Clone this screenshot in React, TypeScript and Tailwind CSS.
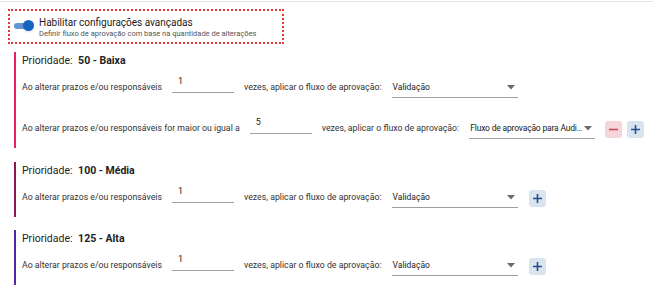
import { useState } from 'react';

type Row = {
	label: string;
	value: string;
	flow: string;
	remove?: boolean;
	add?: boolean;
};

type Section = {
	value: string;
	color: string;
	rows: Row[];
};

const sections: Section[] = [
	{
		value: '50 - Baixa',
		color: 'border-[#e91e63]',
		rows: [
			{ label: 'Ao alterar prazos e/ou responsáveis', value: '1', flow: 'Validação' },
			{
				label: 'Ao alterar prazos e/ou responsáveis for maior ou igual a',
				value: '5',
				flow: 'Fluxo de aprovação para Audi…',
				remove: true,
				add: true,
			},
		],
	},
	{
		value: '100 - Média',
		color: 'border-[#8c1850]',
		rows: [{ label: 'Ao alterar prazos e/ou responsáveis', value: '1', flow: 'Validação', add: true }],
	},
	{
		value: '125 - Alta',
		color: 'border-[#5522a8]',
		rows: [{ label: 'Ao alterar prazos e/ou responsáveis', value: '1', flow: 'Validação', add: true }],
	},
];

const PlusIcon = () => (
	<svg width="11" height="11" viewBox="0 0 11 11">
		<path d="M5.5 1v9M1 5.5h9" stroke="#1f4f8f" strokeWidth="1.6" />
	</svg>
);

const MinusIcon = () => (
	<svg width="11" height="11" viewBox="0 0 11 11">
		<path d="M1 5.5h9" stroke="#d2455a" strokeWidth="1.6" />
	</svg>
);

const RuleRow = ({ row }: { row: Row }) => (
	<div className="flex items-center h-[26px] text-[8.75px] text-[#333]">
		<span className="whitespace-nowrap">{row.label}</span>
		<div className="ml-[10px] w-[62px] h-[16px] border-b border-[#9e9e9e] mt-[-7px] relative shrink-0">
			<span className="absolute left-[6px] top-0 leading-none text-[9px] text-[#222]">{row.value}</span>
		</div>
		<span className="ml-[10px] whitespace-nowrap">vezes, aplicar o fluxo de aprovação:</span>
		<div className="ml-[10px] w-[126px] h-[20px] shrink-0 border-b border-[#9e9e9e] flex items-center pl-[1px] text-[8.5px] text-[#222]">
			<span className={`whitespace-nowrap ${row.remove ? 'tracking-[-0.18px]' : ''}`}>{row.flow}</span>
			<svg width="8" height="5" viewBox="0 0 8 5" className="ml-auto mr-[3px] shrink-0">
				<path d="M0 0h8L4 4.5z" fill="#6b6b6b" />
			</svg>
		</div>
		{row.remove && (
			<button className="ml-[10px] w-[17px] h-[17px] shrink-0 rounded-[3px] bg-[#f4d6d9] flex items-center justify-center">
				<MinusIcon />
			</button>
		)}
		{row.add && (
			<button
				className={`${row.remove ? 'ml-[5px]' : 'ml-[11px]'} w-[17px] h-[17px] shrink-0 rounded-[3px] bg-[#d9e4ee] flex items-center justify-center`}
			>
				<PlusIcon />
			</button>
		)}
	</div>
);

export default function App() {
	const [enabled, setEnabled] = useState(true);

	return (
		<div className="w-[653px] h-[295px] bg-white overflow-hidden font-['Roboto',sans-serif]">
			<div className="mt-[1px] h-px bg-[#e3e3e3]" />
			<div className="mt-[7px] ml-[8px] w-[276px] h-[35px] border-2 border-dotted border-[#e53935] flex items-start pl-[4px] pt-[6px]">
				<button
					onClick={() => setEnabled(!enabled)}
					className="relative w-[21px] h-[12px] mt-[3px] shrink-0"
				>
					<span className="absolute left-0 top-[3px] w-[18px] h-[6px] rounded-full bg-[#6494d6]" />
					<span
						className={`absolute top-0 w-[11px] h-[11px] rounded-full bg-[#1565c0] shadow ${enabled ? 'left-[9px]' : 'left-0'}`}
					/>
				</button>
				<div className="ml-[4px]">
					<div className="text-[10px] text-[#222] leading-[12px]">Habilitar configurações avançadas</div>
					<div className="text-[7.5px] text-[#555] leading-[9px]">
						Definir fluxo de aprovação com base na quantidade de alterações
					</div>
				</div>
			</div>

			<div className="ml-[14px] mt-[8px] flex flex-col">
				{sections.map((s, i) => (
					<div
						key={s.value}
						className={`border-l-2 ${s.color} pl-[6px] pb-[6px] ${i === 0 ? '' : i === 1 ? 'mt-[14px]' : 'mt-[13px]'}`}
					>
						<div className="text-[10.5px] text-[#222] h-[17px] leading-[17px]">
							Prioridade: <span className="ml-[3px] font-bold">{s.value}</span>
						</div>
						<div className="flex flex-col gap-[15px] mt-[6px]">
							{s.rows.map((r, j) => (
								<RuleRow key={j} row={r} />
							))}
						</div>
					</div>
				))}
			</div>
		</div>
	);
}
